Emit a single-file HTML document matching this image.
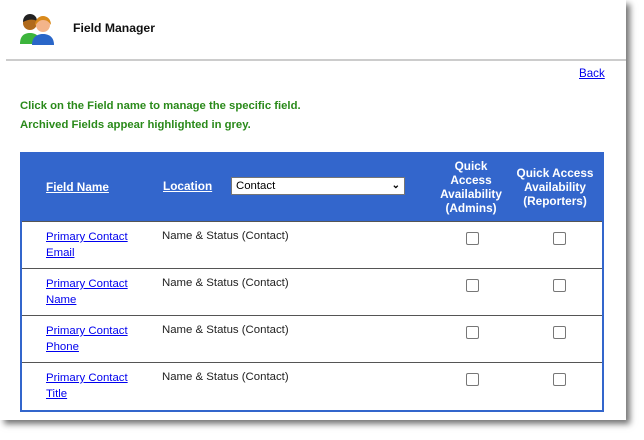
<!DOCTYPE html>
<html><head><style>
body{margin:0;width:644px;height:440px;background:#fff;position:relative;overflow:hidden;font-family:"Liberation Sans",Arial,sans-serif;}
.page{position:absolute;left:0;top:0;width:626px;height:420px;background:#fff;box-shadow:4px 4px 6px rgba(0,0,0,.55);}
.a{position:absolute;}
.hd{color:#fff;font-weight:bold;font-size:11.8px;text-align:center;line-height:14px;}
.hd u{color:#fff}
.row{position:absolute;left:22px;width:580px;height:46px;border-top:1.5px solid #555;}
.cb{position:absolute;width:11px;height:11px;border:1px solid #777;border-radius:2px;background:#fff;}
.lk{position:absolute;left:24px;top:8px;font-size:11.4px;line-height:15.5px;color:#0000ee;text-decoration:underline;}
.loc{position:absolute;left:140px;top:8px;font-size:11.4px;color:#222;}
</style></head><body>
<div class="page">
<svg class="a" style="left:18px;top:12px" width="42" height="34" viewBox="0 0 42 34">
<path d="M2 32c0-8 4-11 10-11s10 3 10 11z" fill="#3cb43c"/>
<circle cx="12" cy="11" r="7" fill="#b06a1c"/><path d="M5 10c0-6 4-8 7-8s7 2 7 7c-3-2-9-2-14 1z" fill="#222"/>
<path d="M14 33c0-8 5-11 11-11s11 3 11 11z" fill="#2a66c8"/>
<circle cx="25" cy="13" r="7" fill="#f3b48a"/><path d="M17 14c0-7 4-10 8-10s8 3 8 9c-2-3-4-5-8-5s-6 3-8 6z" fill="#d98a1c"/>
</svg>
<div class="a" style="left:73px;top:21px;font-size:12.2px;font-weight:bold;color:#111">Field Manager</div>
<div class="a" style="left:6px;top:59px;width:620px;height:2px;background:#ccc"></div>
<div class="a" style="left:579px;top:67px;font-size:11.6px;color:#0000ee;text-decoration:underline">Back</div>
<div class="a" style="left:20px;top:97px;font-size:11.3px;font-weight:bold;color:#2a8a1a;line-height:19px">Click on the Field name to manage the specific field.<br>Archived Fields appear highlighted in grey.</div>
<div class="a" style="left:20px;top:152px;width:580px;height:256px;border:2px solid #3366cc;"></div>
<div class="a" style="left:22px;top:154px;width:580px;height:67px;background:#3366cc"></div>
<div class="a hd" style="left:46px;top:180px"><u>Field Name</u></div>
<div class="a hd" style="left:163px;top:179px"><u>Location</u></div>
<div class="a" style="left:231px;top:177px;width:174px;height:18px;background:#fff;border:1px solid #767676;font-size:11.4px;line-height:16px;box-sizing:border-box;padding-left:4px;">Contact<span style="position:absolute;right:4px;top:0;font-size:10px;font-weight:bold">&#8964;</span></div>
<div class="a hd" style="left:430px;top:159px;width:82px">Quick<br>Access<br>Availability<br>(Admins)</div>
<div class="a hd" style="left:512px;top:166px;width:86px">Quick Access<br>Availability<br>(Reporters)</div>
<div class="row" style="top:221px"><div class="lk">Primary Contact<br>Email</div><div class="loc">Name &amp; Status (Contact)</div><div class="cb" style="left:444px;top:10px"></div><div class="cb" style="left:531px;top:10px"></div></div>
<div class="row" style="top:268px"><div class="lk">Primary Contact<br>Name</div><div class="loc">Name &amp; Status (Contact)</div><div class="cb" style="left:444px;top:10px"></div><div class="cb" style="left:531px;top:10px"></div></div>
<div class="row" style="top:315px"><div class="lk">Primary Contact<br>Phone</div><div class="loc">Name &amp; Status (Contact)</div><div class="cb" style="left:444px;top:10px"></div><div class="cb" style="left:531px;top:10px"></div></div>
<div class="row" style="top:362px"><div class="lk">Primary Contact<br>Title</div><div class="loc">Name &amp; Status (Contact)</div><div class="cb" style="left:444px;top:10px"></div><div class="cb" style="left:531px;top:10px"></div></div>
</div>
</body></html>
